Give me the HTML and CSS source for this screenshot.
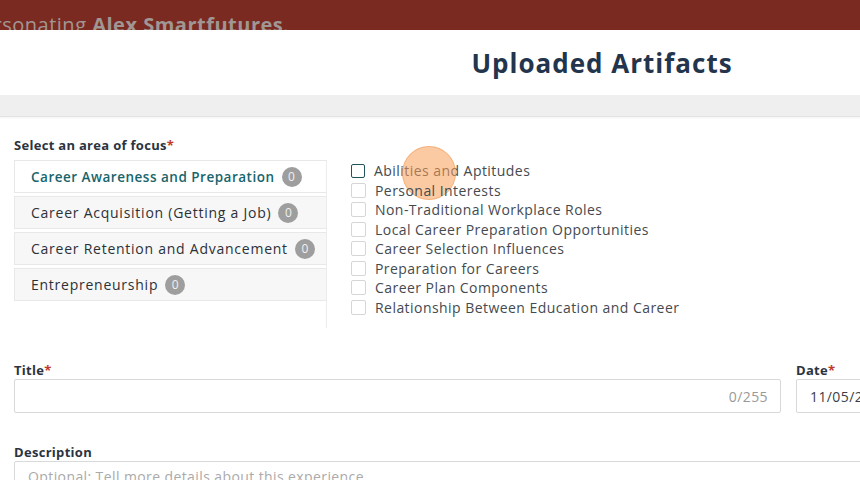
FILE: index.html
```html
<!DOCTYPE html>
<html>
<head>
<meta charset="utf-8">
<link rel="stylesheet" href="styles.css">
</head>
<body>
<div class="page">
  <header class="impersonate-bar">
    <span class="imp-text">Impersonating <b>Alex Smartfutures</b>.</span>
  </header>
  <div class="title-area">
    <h1>Uploaded Artifacts</h1>
  </div>
  <div class="band"></div>
  <main class="content">
    <div class="label">Select an area of focus<span class="req">*</span></div>
    <div class="focus-row">
      <ul class="tabs">
        <li class="tab active">Career Awareness and Preparation <span class="badge">0</span></li>
        <li class="tab">Career Acquisition (Getting a Job) <span class="badge">0</span></li>
        <li class="tab">Career Retention and Advancement <span class="badge">0</span></li>
        <li class="tab">Entrepreneurship <span class="badge">0</span></li>
      </ul>
      <ul class="checks">
        <li><span class="box focus"></span>Abilities and Aptitudes<span class="click-dot"></span></li>
        <li><span class="box"></span>Personal Interests</li>
        <li><span class="box"></span>Non-Traditional Workplace Roles</li>
        <li><span class="box"></span>Local Career Preparation Opportunities</li>
        <li><span class="box"></span>Career Selection Influences</li>
        <li><span class="box"></span>Preparation for Careers</li>
        <li><span class="box"></span>Career Plan Components</li>
        <li><span class="box"></span>Relationship Between Education and Career</li>
      </ul>
    </div>
    <div class="fields">
      <div class="field">
        <div class="label">Title<span class="req">*</span></div>
        <div class="input"><span class="counter">0/255</span></div>
      </div>
      <div class="field">
        <div class="label">Date<span class="req">*</span></div>
        <div class="input date">11/05/2021</div>
      </div>
    </div>
    <div class="field desc">
      <div class="label">Description</div>
      <div class="input textarea"><span class="placeholder">Optional: Tell more details about this experience.</span></div>
    </div>
  </main>
</div>
</body>
</html>
```

FILE: styles.css
```css
html, body {
  margin: 0;
  padding: 0;
  background: #fff;
  overflow: hidden;
  width: 860px;
  height: 480px;
}
body {
  font-family: "Open Sans", "Liberation Sans", sans-serif;
  color: #3a3f45;
}
.page {
  width: 1204px;
}
.impersonate-bar {
  height: 30px;
  background: #7b2a21;
  overflow: hidden;
  display: flex;
  align-items: flex-start;
}
.imp-text {
  margin-left: -56px;
  margin-top: 13px;
  font-size: 20px;
  line-height: 24px;
  letter-spacing: 0.5px;
  color: #a09794;
  white-space: nowrap;
}
.imp-text b {
  font-weight: 700;
}
.title-area {
  height: 65px;
  display: flex;
  justify-content: center;
  align-items: center;
}
.title-area h1 {
  margin: 0;
  font-size: 26px;
  font-weight: 700;
  color: #23354d;
  letter-spacing: 1px;
}
.band {
  height: 21px;
  background: #efefef;
  border-bottom: 1px solid #e2e2e2;
  box-shadow: 0 1px 2px rgba(0,0,0,0.05);
}
.content {
  padding: 19px 14px 0 14px;
}
.label {
  font-size: 13px;
  font-weight: 700;
  color: #2b3440;
  line-height: 18px;
  letter-spacing: 0.3px;
}
.req {
  color: #c0392b;
}
.focus-row {
  display: flex;
  margin-top: 6px;
}
.tabs {
  list-style: none;
  margin: 0;
  padding: 0;
  width: 312px;
  height: 168px;
  border-right: 1px solid #ececec;
  display: flex;
  flex-direction: column;
  gap: 3px;
}
.tab {
  height: 31px;
  background: #f7f7f7;
  border: 1px solid #e8e8e8;
  border-right: none;
  display: flex;
  align-items: center;
  padding-left: 16px;
  font-size: 14px;
  letter-spacing: 0.75px;
  color: #2c3137;
  white-space: nowrap;
}
.tab.active {
  background: #fff;
  color: #17656c;
  font-weight: 600;
  font-size: 13.5px;
  letter-spacing: 0.5px;
}
.badge {
  display: inline-flex;
  align-items: center;
  justify-content: center;
  width: 20px;
  height: 20px;
  border-radius: 50%;
  background: #9e9e9e;
  color: #f0f0f0;
  font-size: 12px;
  font-weight: 400;
  letter-spacing: 0;
  margin-left: 7px;
}
.checks {
  list-style: none;
  margin: 1px 0 0 24px;
  padding: 0;
}
.checks li {
  position: relative;
  display: flex;
  align-items: center;
  height: 19.5px;
  font-size: 14px;
  letter-spacing: 0.45px;
  color: #454a50;
  white-space: nowrap;
}
.box {
  width: 13px;
  height: 13px;
  border: 1px solid #d6d6d6;
  border-radius: 2px;
  margin-right: 9px;
  background: #fff;
}
.box.focus {
  border: 1.5px solid #1f5459;
  width: 12px;
  height: 12px;
}
.click-dot {
  position: absolute;
  left: 51px;
  top: -15px;
  width: 52px;
  height: 52px;
  border-radius: 50%;
  background: rgba(247, 158, 88, 0.55);
  border: 1px solid rgba(240, 150, 80, 0.5);
}
.fields {
  display: grid;
  grid-template-columns: 767px 200px;
  column-gap: 15px;
  margin-top: 33px;
}
.field .label {
  margin-bottom: 0;
}
.input {
  height: 32px;
  border: 1px solid #d9d9d9;
  border-radius: 2px;
  display: flex;
  align-items: center;
  font-size: 14px;
  letter-spacing: 0.4px;
  color: #3a3f45;
  padding: 0 12px 0 13px;
}
.counter {
  margin-left: auto;
  color: #999;
}
.desc {
  margin-top: 30px;
  width: 1176px;
}
.textarea {
  height: 60px;
  align-items: flex-start;
  padding-top: 5px;
}
.placeholder {
  color: #aaa;
}
```
